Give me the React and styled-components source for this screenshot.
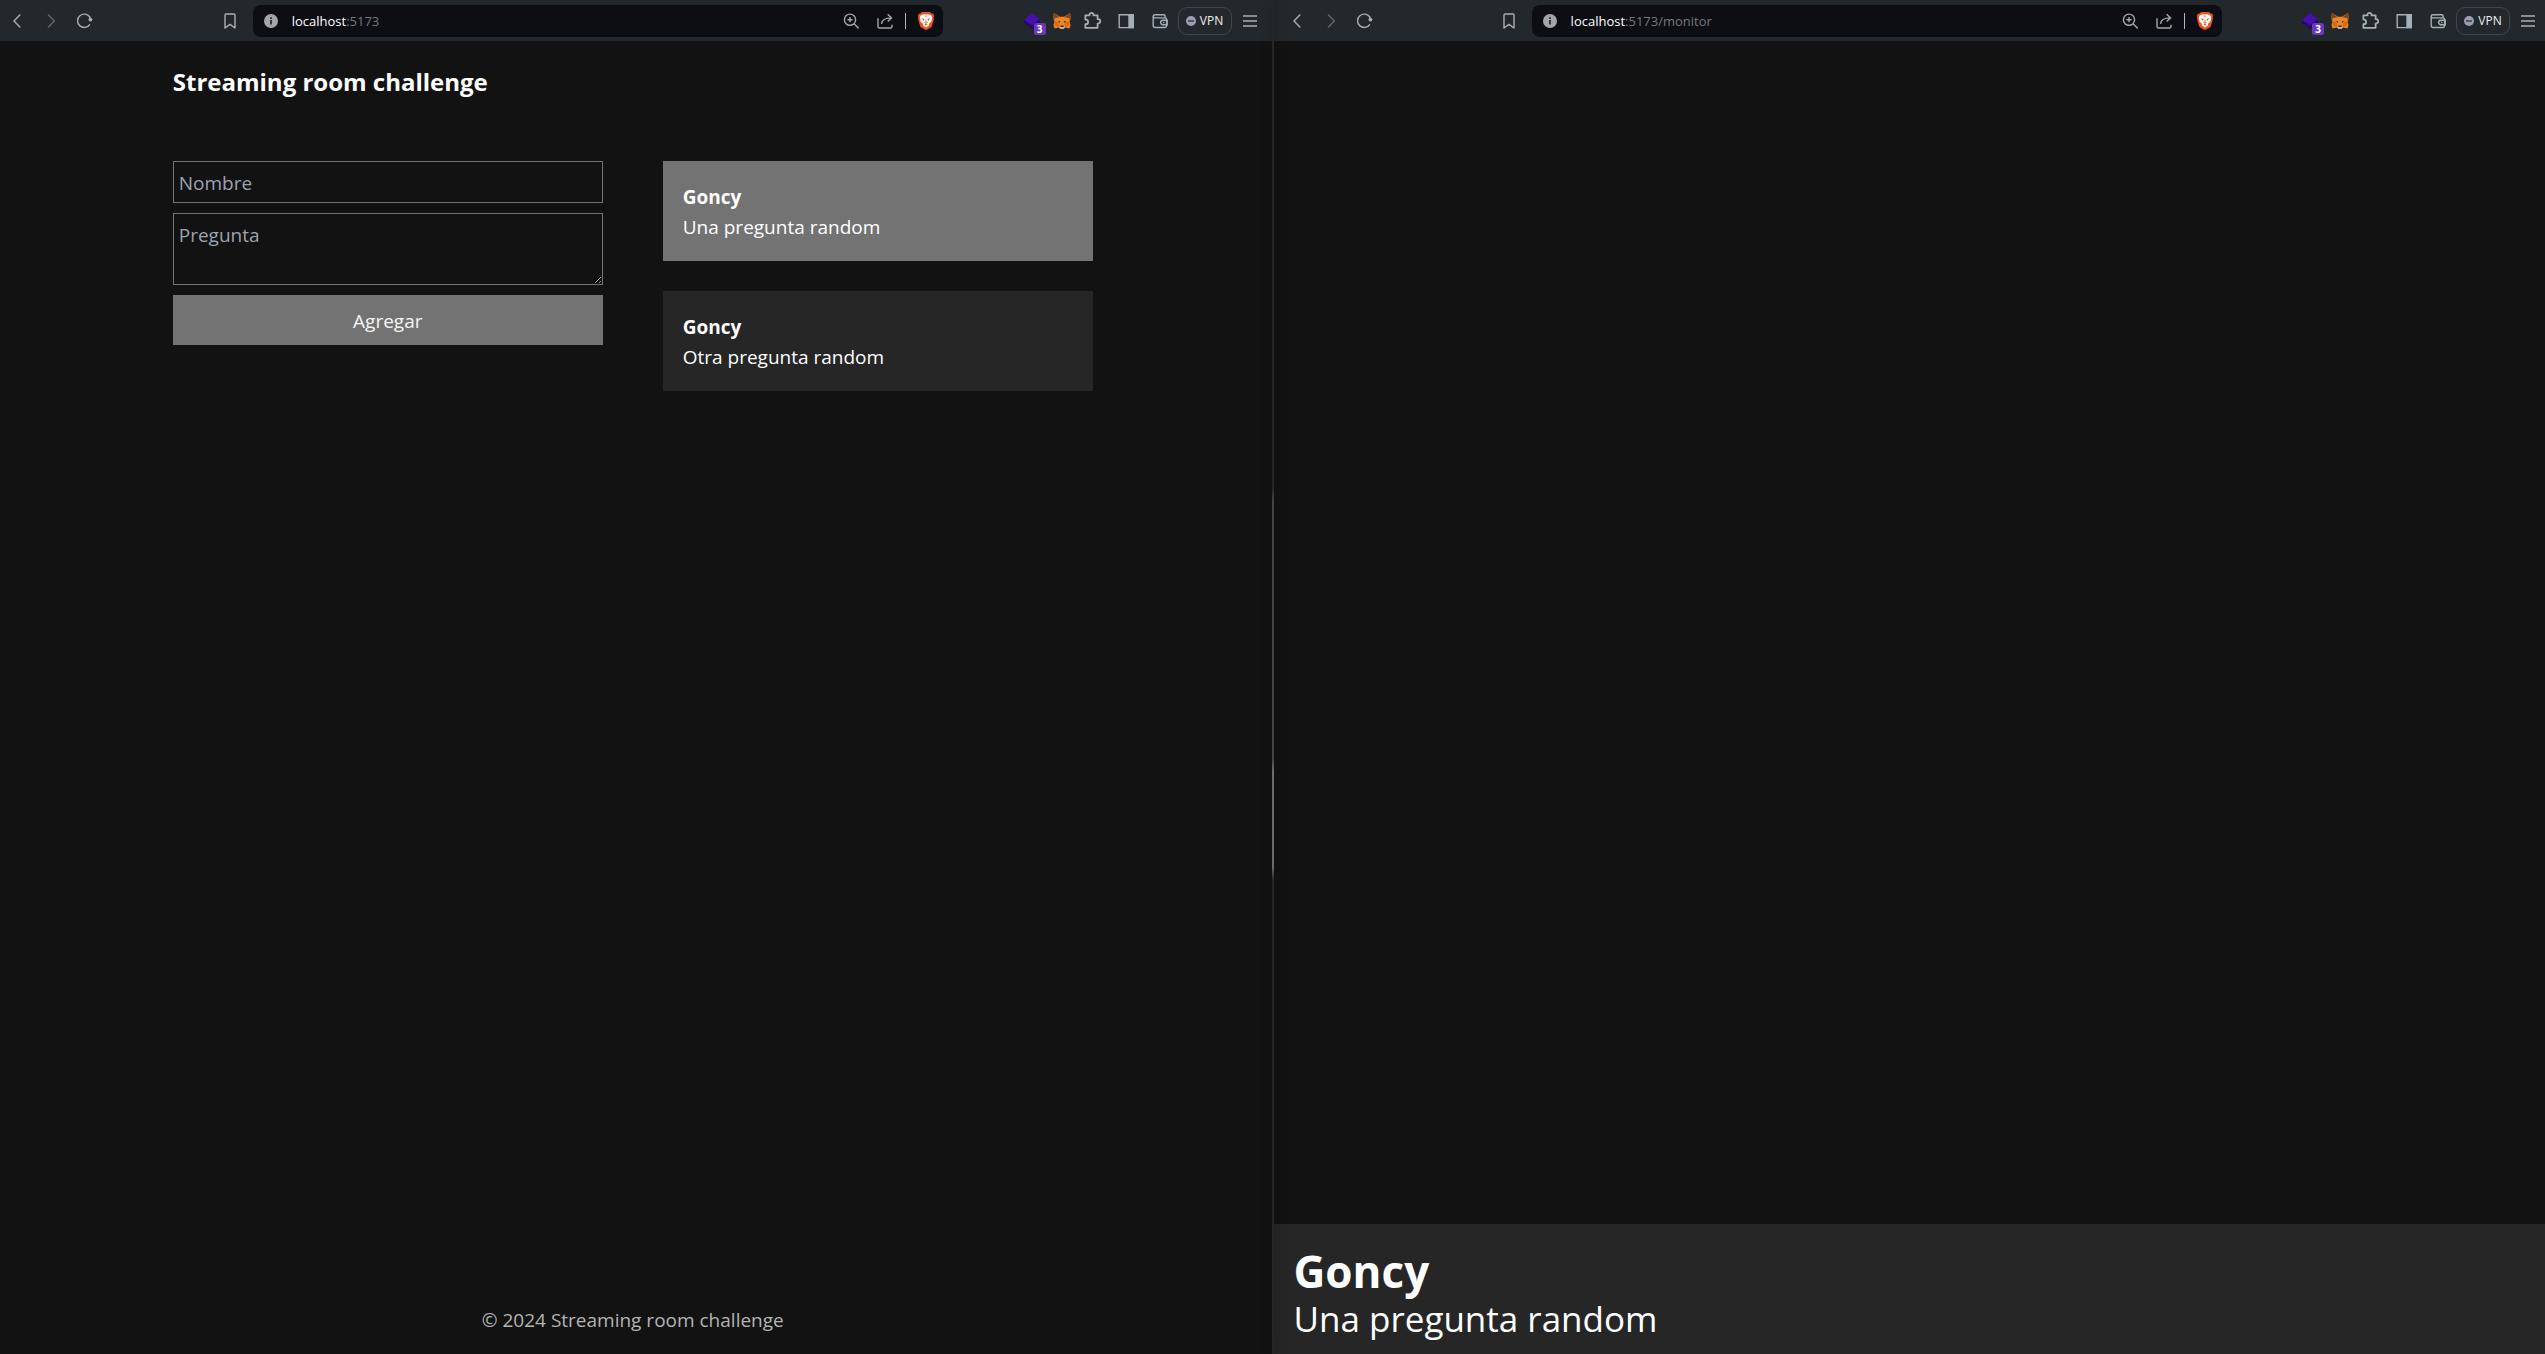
import React, { useState } from "react";
import styled, { createGlobalStyle, css } from "styled-components";

const GlobalStyle = createGlobalStyle`
  *, *::before, *::after { box-sizing: border-box; }
  body {
    margin: 0;
    background: #121212;
    color: #fff;
    font-family: "Open Sans", "Noto Sans", sans-serif;
    font-size: 19px;
    line-height: 30px;
  }
  h1, h2, p { margin: 0; }
  button, input, textarea { font: inherit; color: inherit; }
`;

const Desktop = styled.div`
  display: grid;
  grid-template-columns: minmax(0, 1fr) 2px minmax(0, 1fr);
  min-height: 100vh;
`;

const Divider = styled.div`
  z-index: 1;
  background: linear-gradient(
    #262626 36%,
    #43434b 37%,
    #43434b 56%,
    #6c6c6c 57%,
    #6c6c6c 64%,
    #262626 65%
  );
  box-shadow: 2px 0 12px rgba(0, 0, 0, 0.4);
`;

const Window = styled.section`
  display: flex;
  flex-direction: column;
  min-width: 0;
`;

const Toolbar = styled.header`
  display: grid;
  grid-template-columns: auto 3fr minmax(0, 730px) 2fr auto;
  align-items: center;
  height: 41px;
  padding: ${(p) => (p.$side === "left" ? "0 5px 0 0" : "0 0 0 6px")};
  background: #23282c;
  color: #a4b0b8;
`;

const ToolGroup = styled.div`
  display: flex;
  align-items: center;
  grid-column: ${(p) => p.$column};
  min-width: 0;
`;

const ToolButton = styled.button`
  display: flex;
  flex: none;
  align-items: center;
  justify-content: center;
  width: ${(p) => (p.$narrow ? "30px" : "34px")};
  height: 32px;
  margin-left: ${(p) => (p.$spaced ? "2px" : "0")};
  padding: 0;
  border: 0;
  background: none;
  color: ${(p) => (p.$dim ? "#61676c" : "inherit")};
  cursor: pointer;
`;

const Address = styled.div`
  display: flex;
  flex: 1;
  align-items: center;
  min-width: 0;
  height: 32px;
  margin-left: 6px;
  padding-left: 11px;
  border-radius: 8px;
  background: #0d0e13;
  color: #a5a6ae;
`;

const Url = styled.div`
  flex: 1;
  min-width: 0;
  margin-left: 14px;
  overflow: hidden;
  color: #76777c;
  font-size: 13px;
  line-height: 20px;
  white-space: nowrap;
  outline: none;
`;

const Host = styled.span`
  color: #fff;
`;

const Separator = styled.span`
  flex: none;
  width: 1px;
  height: 16px;
  margin: 0 3px;
  background: #b4b5ba;
`;

const BadgeHolder = styled.span`
  position: relative;
  display: flex;
`;

const Badge = styled.span`
  position: absolute;
  right: -4px;
  bottom: -4px;
  width: 12px;
  height: 12px;
  border-radius: 2px;
  background: #673ab7;
  color: #fff;
  font-size: 10px;
  font-weight: 700;
  line-height: 12px;
  text-align: center;
`;

const VpnButton = styled.button`
  display: flex;
  flex: none;
  align-items: center;
  justify-content: center;
  gap: 4px;
  width: 54px;
  height: 28px;
  margin: 0 1px;
  padding: 0;
  border: 1px solid #40464b;
  border-radius: 9px;
  background: none;
  color: #eceef0;
  font-size: 12px;
  line-height: 20px;
  cursor: pointer;
`;

const Page = styled.div`
  display: flex;
  flex: 1;
  flex-direction: column;
  width: 100%;
  max-width: 966px;
  margin: 0 auto;
  padding: 21px 26px 19px 20px;
`;

const Title = styled.h1`
  font-size: 24px;
  font-weight: 700;
  line-height: 40px;
`;

const Columns = styled.main`
  display: grid;
  flex: 1;
  grid-template-columns: repeat(2, minmax(0, 1fr));
  align-items: start;
  gap: 60px;
  margin-top: 59px;
`;

const Form = styled.form`
  display: flex;
  flex-direction: column;
  gap: 10px;
`;

const field = css`
  display: block;
  width: 100%;
  padding: 6px 5px 4px;
  border: 1px solid #737373;
  border-radius: 0;
  outline: none;
  background: transparent;
  &::placeholder {
    color: #9ca3af;
    opacity: 1;
  }
`;

const NameInput = styled.input`
  ${field}
`;

const QuestionInput = styled.textarea`
  ${field}
  resize: vertical;
`;

const SubmitButton = styled.button`
  padding: 11px 10px 9px;
  border: 0;
  background: #737373;
  color: #f5f5f5;
  cursor: pointer;
`;

const QuestionList = styled.div`
  display: flex;
  flex-direction: column;
  gap: 30px;
`;

const QuestionCard = styled.article`
  padding: 21px 20px 19px;
  background: ${(p) => (p.$active ? "#737373" : "#262626")};
  cursor: pointer;
`;

const Author = styled.h2`
  font-size: 19px;
  font-weight: 700;
  line-height: 30px;
`;

const Footer = styled.footer`
  color: #b4b4b4;
  text-align: center;
`;

const Monitor = styled.main`
  display: flex;
  flex: 1;
  flex-direction: column;
  justify-content: flex-end;
`;

const Caption = styled.div`
  padding: 22px 20px 13px;
  background: #262626;
`;

const CaptionAuthor = styled.h2`
  font-size: 44px;
  font-weight: 700;
  line-height: 50px;
`;

const CaptionText = styled.p`
  font-size: 35px;
  line-height: 45px;
`;

const Icon = ({ children, size = 20 }) => (
  <svg
    width={size}
    height={size}
    viewBox={`0 0 ${size} ${size}`}
    fill="none"
    stroke="currentColor"
    strokeWidth="1.4"
    aria-hidden="true"
  >
    {children}
  </svg>
);

const BackIcon = () => (
  <Icon><path d="M13.3 3.5 7 10l6.3 6.5" /></Icon>
);
const ForwardIcon = () => (
  <Icon><path d="M7 3.5 13.3 10 7 16.5" /></Icon>
);
const ReloadIcon = () => (
  <Icon>
    <path d="M14.9 6.2A6.7 6.7 0 1 0 14.9 13.4" />
    <circle cx="15.4" cy="8.6" r="1.9" fill="currentColor" stroke="none" />
    <path d="M14.4 5.2 15.6 8" />
  </Icon>
);
const BookmarkIcon = () => (
  <Icon><path d="M5 4.2q0-1.2 1.2-1.2h7.6q1.2 0 1.2 1.2V17l-5-3.6L5 17z" strokeLinejoin="round" /></Icon>
);
const InfoIcon = () => (
  <Icon size={14}>
    <circle cx="7" cy="7" r="7" fill="#a3a4ac" stroke="none" />
    <path d="M7 6v4.6M7 3.2v1.7" stroke="#24252b" strokeWidth="1.7" />
  </Icon>
);
const ZoomIcon = () => (
  <Icon>
    <circle cx="9" cy="8.7" r="5.6" />
    <path d="m13.1 12.8 4.6 4.6M9 6.1v5.2M6.4 8.7h5.2" />
  </Icon>
);
const ShareIcon = () => (
  <Icon>
    <path d="M3 7.2v8.2q0 1.6 1.6 1.6h10.8q1.6 0 1.6-1.6v-1.6" />
    <path d="M6.5 12.8C7 8.5 10 6.9 16.3 6.9M12.7 3.2l3.8 3.7-3.8 3.7" />
  </Icon>
);
const BraveIcon = () => (
  <Icon>
    <path
      d="M6 1h8l1.7 1.7 1.3-.1 1.2 2.2-.6 1.6.4 1.4-2.2 7.4q-.3.9-1.1 1.4L10 19.2l-4.7-2.6q-.8-.5-1.1-1.4L2 7.8l.4-1.4-.6-1.6L3 2.6l1.3.1z"
      fill="#f0501c"
      stroke="none"
    />
    <path
      d="m10 3.6 2.2-.4 3 1.1 1.1 2.4-1.1 4.2-2.2 1.8.2 1.5L10 16.6l-3.2-2.4.2-1.5-2.2-1.8-1.1-4.2 1.1-2.4 3-1.1z"
      fill="#fff"
      stroke="none"
    />
    <path d="m5.7 7.1 2.7.9-.6 2zM14.3 7.1l-2.7.9.6 2zM8.4 13.2l1.6-.8 1.6.8-1.6 1.2zM8.8 4.8h2.4L10 6z" fill="#f0501c" stroke="none" />
    <path d="M10 8.6v3.2M8.3 11.2l1.7.9 1.7-.9" stroke="#f0501c" strokeWidth=".8" />
  </Icon>
);
const BoxIcon = () => (
  <Icon>
    <path d="M2 8v4l8.5 6.5L18 12V8z" fill="#260a63" stroke="none" />
    <path d="m10 2.2 8 5.8-8 6.2L2 9z" fill="#4510ae" stroke="none" />
  </Icon>
);
const FoxIcon = () => (
  <Icon>
    <path d="m2 2 6 3.8h4L18 2l.8 4.6L17.6 11l1 3-1.2 3.4-4.2-1L11.6 18H8.4l-1.6-1.6-4.2 1L1.4 14l1-3-1.2-4.4z" fill="#f0841f" stroke="none" />
    <path d="m2 2 5.6 4.2-4.8.9-.8 3.2-.8-3.7zM18 2l-5.6 4.2 4.8.9.8 3.2.8-3.7z" fill="#7a4526" stroke="none" />
    <path d="m2.8 10.4 3.8.4.6 5-4.8-1.5zM17.2 10.4l-3.8.4-.6 5 4.8-1.5z" fill="#d66a1b" stroke="none" />
    <path d="m5.9 9.7 2.2.5-.2 1.8zM14.1 9.7l-2.2.5.2 1.8z" fill="#2f3135" stroke="none" />
    <path d="M8 14.8h4l.6 1.7-1 1.3H8.4l-1-1.3z" fill="#c5b6aa" stroke="none" />
    <path d="M8.5 14.6h3l.2 1.5H8.3z" fill="#28282b" stroke="none" />
  </Icon>
);
const PuzzleIcon = () => (
  <Icon>
    <path
      d="M3.4 4.4h4.1V3.8a2 2 0 0 1 4 0v.6h4.1v3.8h.4a2.2 2.2 0 0 1 0 4.4h-.4v4.2H3.4v-3.6h.4a2.3 2.3 0 0 0 0-4.6h-.4z"
      strokeWidth="1.8"
      strokeLinejoin="round"
    />
  </Icon>
);
const PanelIcon = () => (
  <Icon>
    <path d="M3.2 3.8h14v12.8h-14z" />
    <path d="M13 3.8h4.2v12.8H13z" fill="currentColor" />
  </Icon>
);
const WalletIcon = () => (
  <Icon>
    <path d="M3.2 4.9v9.7q0 1.9 1.9 1.9h9.8q1.7 0 1.7-1.7V8.4q0-1.5-1.5-1.5H5q-1.8 0-1.8-1.7 0-1.5 1.8-1.5h8.8q1.3 0 1.3 1.3v1.7" />
    <path d="M17.2 9.3h-4.4a2 2 0 0 0 0 4.4h4.4z" />
    <path d="M13 11.5h1.4" />
  </Icon>
);
const VpnIcon = () => (
  <Icon size={10}>
    <circle cx="5" cy="5" r="5" fill="#9c9db4" stroke="none" />
    <path d="M2 5h6" stroke="#33373f" />
  </Icon>
);
const MenuIcon = () => (
  <Icon><path d="M3 5h14M3 10h14M3 15h14" /></Icon>
);

function BrowserToolbar({ side, path }) {
  return (
    <Toolbar $side={side}>
      <ToolGroup $column={1}>
        <ToolButton aria-label="Back"><BackIcon /></ToolButton>
        <ToolButton aria-label="Forward" $dim><ForwardIcon /></ToolButton>
        <ToolButton aria-label="Reload"><ReloadIcon /></ToolButton>
      </ToolGroup>
      <ToolGroup $column={3}>
        <ToolButton aria-label="Bookmark"><BookmarkIcon /></ToolButton>
        <Address>
          <InfoIcon />
          <Url role="textbox" aria-label="Address" contentEditable suppressContentEditableWarning spellCheck={false}>
            <Host>localhost</Host>{path}
          </Url>
          <ToolButton aria-label="Zoom"><ZoomIcon /></ToolButton>
          <ToolButton aria-label="Share"><ShareIcon /></ToolButton>
          <Separator />
          <ToolButton aria-label="Shields"><BraveIcon /></ToolButton>
        </Address>
      </ToolGroup>
      <ToolGroup $column={5}>
        <ToolButton aria-label="Extension" $narrow>
          <BadgeHolder>
            <BoxIcon />
            <Badge>3</Badge>
          </BadgeHolder>
        </ToolButton>
        <ToolButton aria-label="MetaMask" $narrow><FoxIcon /></ToolButton>
        <ToolButton aria-label="Extensions" $narrow><PuzzleIcon /></ToolButton>
        <ToolButton aria-label="Sidebar" $spaced><PanelIcon /></ToolButton>
        <ToolButton aria-label="Wallet"><WalletIcon /></ToolButton>
        <VpnButton><VpnIcon />VPN</VpnButton>
        <ToolButton aria-label="Menu"><MenuIcon /></ToolButton>
      </ToolGroup>
    </Toolbar>
  );
}

export default function App() {
  const [questions, setQuestions] = useState([
    { id: 1, author: "Goncy", text: "Una pregunta random" },
    { id: 2, author: "Goncy", text: "Otra pregunta random" },
  ]);
  const [activeId, setActiveId] = useState(1);
  const active = questions.find((q) => q.id === activeId);

  function handleSubmit(event) {
    event.preventDefault();
    const data = new FormData(event.currentTarget);
    setQuestions((list) => [
      ...list,
      { id: list.length + 1, author: data.get("author"), text: data.get("question") },
    ]);
    event.currentTarget.reset();
  }

  return (
    <>
      <GlobalStyle />
      <Desktop>
        <Window>
          <BrowserToolbar side="left" path=":5173" />
          <Page>
            <Title>Streaming room challenge</Title>
            <Columns>
              <Form onSubmit={handleSubmit}>
                <NameInput name="author" aria-label="Nombre" placeholder="Nombre" />
                <QuestionInput name="question" aria-label="Pregunta" placeholder="Pregunta" rows={2} />
                <SubmitButton type="submit">Agregar</SubmitButton>
              </Form>
              <QuestionList>
                {questions.map((q) => (
                  <QuestionCard key={q.id} $active={q.id === activeId} onClick={() => setActiveId(q.id)}>
                    <Author>{q.author}</Author>
                    <p>{q.text}</p>
                  </QuestionCard>
                ))}
              </QuestionList>
            </Columns>
            <Footer>© 2024 Streaming room challenge</Footer>
          </Page>
        </Window>
        <Divider />
        <Window>
          <BrowserToolbar side="right" path=":5173/monitor" />
          <Monitor>
            <Caption>
              <CaptionAuthor>{active.author}</CaptionAuthor>
              <CaptionText>{active.text}</CaptionText>
            </Caption>
          </Monitor>
        </Window>
      </Desktop>
    </>
  );
}
